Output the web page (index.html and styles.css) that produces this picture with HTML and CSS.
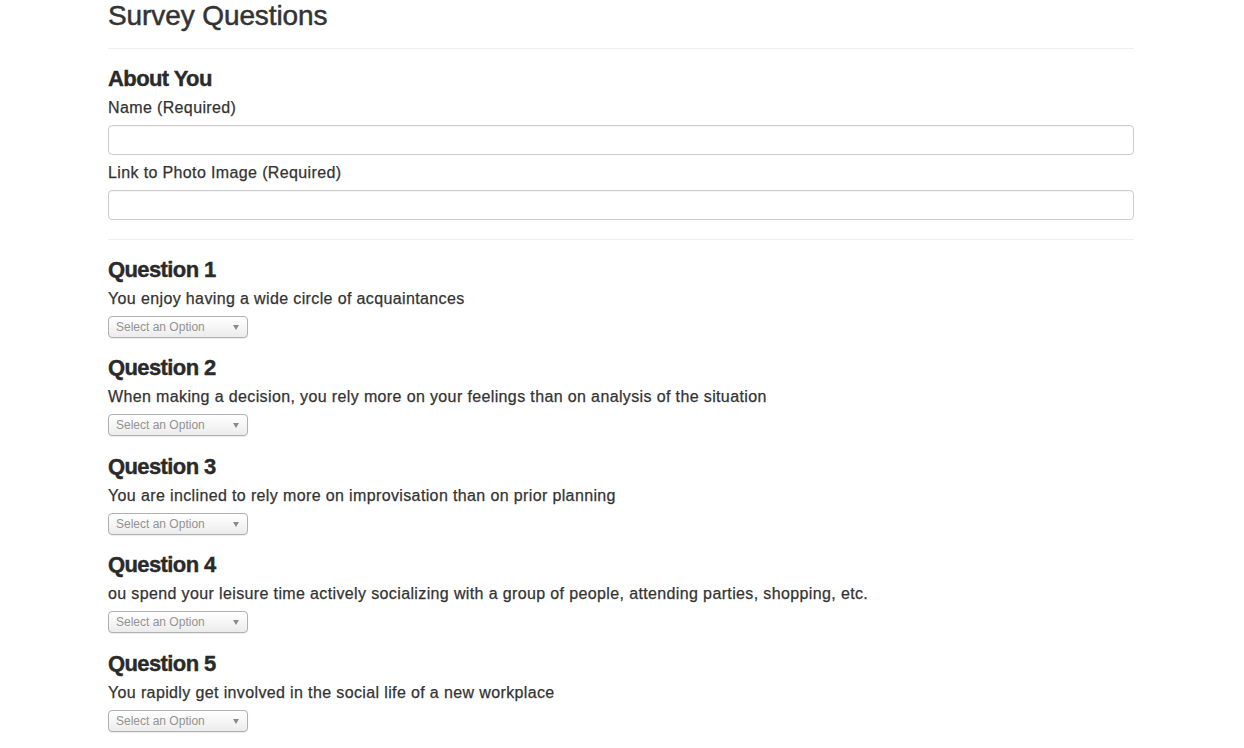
FILE: index.html
```html
<!DOCTYPE html>
<html lang="en">
<head>
<meta charset="utf-8">
<title>Survey Questions</title>
<link rel="stylesheet" href="styles.css">
</head>
<body>
<div class="container">
  <h1 class="title">Survey Questions</h1>
  <hr class="rule">
  <section class="block">
    <h3 class="heading">About You</h3>
    <label class="label" for="name">Name (Required)</label>
    <input class="field" id="name" type="text">
    <label class="label" for="photo">Link to Photo Image (Required)</label>
    <input class="field" id="photo" type="text">
  </section>
  <hr class="rule rule-q">
  <section class="question">
    <h3 class="heading">Question 1</h3>
    <p class="label">You enjoy having a wide circle of acquaintances</p>
    <div class="select"><span class="select-text">Select an Option</span><span class="caret"></span></div>
  </section>
  <section class="question">
    <h3 class="heading">Question 2</h3>
    <p class="label">When making a decision, you rely more on your feelings than on analysis of the situation</p>
    <div class="select"><span class="select-text">Select an Option</span><span class="caret"></span></div>
  </section>
  <section class="question">
    <h3 class="heading">Question 3</h3>
    <p class="label">You are inclined to rely more on improvisation than on prior planning</p>
    <div class="select"><span class="select-text">Select an Option</span><span class="caret"></span></div>
  </section>
  <section class="question">
    <h3 class="heading">Question 4</h3>
    <p class="label">ou spend your leisure time actively socializing with a group of people, attending parties, shopping, etc.</p>
    <div class="select"><span class="select-text">Select an Option</span><span class="caret"></span></div>
  </section>
  <section class="question">
    <h3 class="heading">Question 5</h3>
    <p class="label">You rapidly get involved in the social life of a new workplace</p>
    <div class="select"><span class="select-text">Select an Option</span><span class="caret"></span></div>
  </section>
</div>
</body>
</html>
```
FILE: styles.css
```css
html, body {
  margin: 0;
  padding: 0;
  background: #fff;
}
body {
  font-family: "Liberation Sans", Arial, Helvetica, sans-serif;
  color: #333;
  overflow: hidden;
}
.container {
  width: 1026px;
  margin-left: 108px;
}
.title {
  margin: 0;
  font-size: 28px;
  line-height: 31px;
  font-weight: 400;
  letter-spacing: -0.1px;
  color: #333;
  -webkit-text-stroke: 0.5px #333;
}
.rule {
  margin: 17px 0 17px;
  border: 0;
  border-top: 1px solid #eee;
  height: 0;
}
.rule-q {
  margin: 19px 0 17px;
}
.heading {
  margin: 0 0 6px;
  font-size: 22px;
  line-height: 26px;
  font-weight: 700;
  letter-spacing: -0.6px;
  color: #2a2a2a;
  -webkit-text-stroke: 0.4px #2a2a2a;
}
.label {
  display: block;
  margin: 0 0 7px;
  font-size: 16px;
  line-height: 20px;
  font-weight: 400;
  letter-spacing: 0.37px;
  color: #333;
  -webkit-text-stroke: 0.25px #333;
}
.field {
  display: block;
  box-sizing: border-box;
  width: 100%;
  height: 30px;
  margin: 0 0 8px;
  padding: 4px 10px;
  border: 1px solid #ccc;
  border-radius: 4px;
  background: #fff;
  box-shadow: inset 0 1px 1px rgba(0,0,0,0.04);
  font: 14px "Liberation Sans", Arial, sans-serif;
}
.question {
  margin-bottom: 17.4px;
}
.select {
  position: relative;
  box-sizing: border-box;
  width: 140px;
  height: 22px;
  margin-top: 1px;
  border: 1px solid #b0b0b0;
  border-radius: 4px;
  background: linear-gradient(#ffffff, #f4f4f4 60%, #ebebeb);
  box-shadow: 0 1px 1px rgba(0,0,0,0.08);
  display: flex;
  align-items: center;
  padding-left: 7px;
}
.select-text {
  font-size: 12px;
  line-height: 14px;
  color: #939393;
}
.caret {
  position: absolute;
  right: 8px;
  top: 8px;
  width: 0;
  height: 0;
  border-left: 3px solid transparent;
  border-right: 3px solid transparent;
  border-top: 5px solid #8a8a8a;
}
```
